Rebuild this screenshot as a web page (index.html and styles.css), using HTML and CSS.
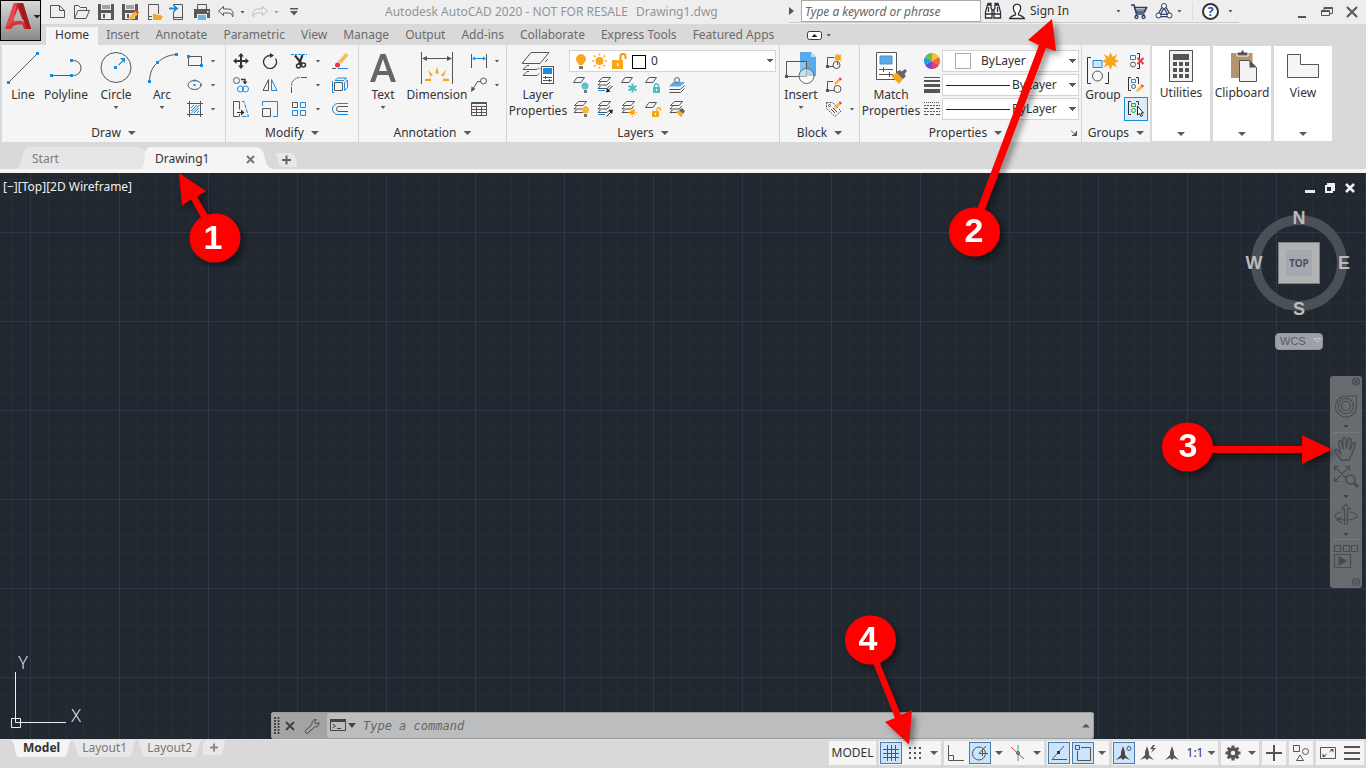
FILE: index.html
```html
<!DOCTYPE html>
<html lang="en">
<head>
<meta charset="utf-8">
<title>Autodesk AutoCAD 2020 - Drawing1.dwg</title>
<link rel="stylesheet" href="styles.css">
</head>
<body>
<svg class="sprite" aria-hidden="true">
  <symbol id="sheet" viewBox="0 0 12 6"><path d="M4 .5h7.500l-3.500 5H.5z" class="k"/></symbol>
  <symbol id="stack" viewBox="0 0 14 13"><path d="M5.500.5h8l-3.500 4H1.500zM3.500 5.500l-2.500 2.500h9l3-3M3.500 9l-2.500 2.500h9l3-3" class="k"/></symbol>
  <symbol id="pencil" viewBox="0 0 8 8"><path d="M1 7l.6-2.200L5 1.400 6.800 3.200 3.200 6.400z" fill="#fdb43c"/><path d="M5 1.400L6.200.2 8 2 6.800 3.200z" fill="#f03c3c"/></symbol>
</svg>

<header class="top">
  <button class="app-btn" aria-label="Application menu">
    <svg width="28" height="30" viewBox="0 0 28 30"><path d="M1 27L10 1h9l8 26h-7l-2-6-8-2-3 8z" fill="#c8242b"/><path d="M1 27L10 1h3L8 27z" fill="#e8474b"/><path d="M10 16l4-10 4 11 4 3-12-1z" fill="#b9b3b3"/><path d="M14 3l5-2 8 26h-4z" fill="#a31920"/><path d="M1 27c6-8 14-10 19-7l2 4c-7-3-13-1-16 3z" fill="#d8353a"/></svg>
    <span class="caret caret-dark"></span>
  </button>

  <div class="titlebar">
    <div class="qat">
      <button aria-label="New"><svg width="18" height="16" viewBox="0 0 18 16"><path d="M1.500 1.500h9l5 5v7h-14zM10.500 1.500v5h5" class="k"/></svg></button>
      <button aria-label="Open"><svg width="18" height="16" viewBox="0 0 18 16"><path d="M1.500 14.500v-13h4l2 2h6v3M1.500 14.500l3.500-8h11.500l-3.500 8z" class="k"/></svg></button>
      <button aria-label="Save"><svg width="18" height="18" viewBox="0 0 18 18"><path d="M1 1h16v16H1z" fill="#595959"/><path d="M4 1h10v6H4zM4 10h10v6H4z" fill="#eee"/><path d="M5 2.500h8v1H5zM5 4.500h8v1H5zM6 11h2v4H6z" fill="#595959"/></svg></button>
      <button aria-label="Save As"><svg width="18" height="18" viewBox="0 0 18 18"><path d="M1 1h16v16H1z" fill="#595959"/><path d="M4 1h10v6H4zM4 10h10v6H4z" fill="#eee"/><path d="M5 2.500h8v1H5zM5 4.500h8v1H5zM6 11h2v4H6z" fill="#595959"/><path d="M8 17l1-4 5-5 3 3-5 5z" fill="#fdb43c"/><path d="M14 8l1.500-1.500 2.500 3L17 11z" fill="#f03c3c"/></svg></button>
      <button aria-label="Open from mobile"><svg width="18" height="18" viewBox="0 0 18 18"><path d="M3.500 17V1.500h10V11M3 16.500h4M3.500 13.500H7" class="k"/><path d="M8 17v-6h3l1 1h4v1h2l-2 4z" fill="#f5a623"/></svg></button>
      <button aria-label="Save to mobile"><svg width="18" height="18" viewBox="0 0 18 18"><path d="M4.500 3V1.500h9v15h-9V8M5 14.500h8" class="k"/><path d="M0 4.500h5V2l4.500 3.500L5 9V6.500H0z" fill="#1a8ce0"/></svg></button>
      <button aria-label="Plot"><svg width="18" height="18" viewBox="0 0 18 18"><path d="M4.500 6V1.500h9V6" class="k"/><path d="M1 6h16v9h-3v-4H4v4H1z" fill="#595959"/><path d="M14 8h1.500v1.500H14z" fill="#fff"/><path d="M5 12h8v5H5z" fill="#6cb4e8"/></svg></button>
      <button aria-label="Undo"><svg width="18" height="14" viewBox="0 0 18 14"><path d="M6.500 1.500L1.500 6l5 4.500V8h5c2.500 0 4 1.500 4 4 1.500-4 0-8-4-8h-5z" class="k"/></svg></button>
      <span class="caret caret-sm"></span>
      <button aria-label="Redo"><svg width="18" height="14" viewBox="0 0 18 14"><path d="M11.500 1.500l5 4.500-5 4.500V8h-5c-2.500 0-4 1.500-4 4C1 8 2.500 4 6.500 4h5z" fill="none" stroke="#bdbdbd"/></svg></button>
      <span class="caret caret-sm faint"></span>
      <button aria-label="Customize"><svg width="10" height="8" viewBox="0 0 10 8"><path d="M1 0h8v1.500H1zM1 3h8L5 7.500z" fill="#595959"/></svg></button>
    </div>
    <h1 class="app-title"><span>Autodesk AutoCAD 2020 - NOT FOR RESALE</span><span>Drawing1.dwg</span></h1>
    <div class="infocenter">
      <svg class="play" width="5" height="8" viewBox="0 0 5 8"><path d="M0 0l5 4-5 4z" fill="#555"/></svg>
      <input class="search" type="text" aria-label="Search" placeholder="Type a keyword or phrase">
      <button class="i24" aria-label="Find"><svg width="18" height="18" viewBox="0 0 18 18"><path d="M3.500 3h3.500v3l1 2v8H1.500v-6zM14.500 3H11v3l-1 2v8h6.500v-6zM8 8h2v4H8zM4 1.500h3V3H4zM11 1.500h3V3h-3zM1.500 12H8M10 12h6.500M4.500 5v5M13.500 5v5" fill="#fff" stroke="#2b2f38" stroke-width="1.300"/></svg></button>
      <button class="signin"><svg width="18" height="17" viewBox="0 0 18 17"><path d="M9 1.200c2.600 0 3.800 2 3.600 4.300-.2 2-1.300 4-2.100 4.800v1.500c3 .8 5 1.500 5.800 3.700H1.700c.8-2.200 2.800-2.900 5.800-3.700v-1.500C6.700 9.500 5.600 7.500 5.400 5.500 5.200 3.200 6.400 1.200 9 1.200z" fill="#fff" stroke="#2b2f38" stroke-width="1.300"/></svg><span>Sign In</span><i class="caret caret-sm"></i></button>
      <button class="i24" aria-label="App store"><svg width="18" height="18" viewBox="0 0 18 18"><path d="M1 3h3l2.500 9h8M4.800 5.500h11.700l-2 4.500H6" fill="none" stroke="#2d3c66" stroke-width="1.700"/><path d="M6 8h9" stroke="#2d3c66"/><circle cx="6.500" cy="15" r="1.500" fill="none" stroke="#2d3c66" stroke-width="1.300"/><circle cx="13.500" cy="15" r="1.500" fill="none" stroke="#2d3c66" stroke-width="1.300"/></svg></button>
      <button class="a360" aria-label="Connect"><svg width="18" height="18" viewBox="0 0 18 18"><path d="M9 4l5.500 9.500h-11z" fill="none" stroke="#2d3c66" stroke-width="3.400" stroke-linejoin="round"/><path d="M9 4l5.500 9.500h-11z" fill="none" stroke="#fff" stroke-linejoin="round"/><circle cx="9" cy="4" r="2.500" fill="#fff" stroke="#2d3c66"/><circle cx="3.500" cy="13.500" r="2.500" fill="#fff" stroke="#2d3c66"/><circle cx="14.500" cy="13.500" r="2.500" fill="#fff" stroke="#2d3c66"/></svg><i class="caret caret-sm"></i></button>
      <button class="help" aria-label="Help"><b>?</b></button>
      <i class="caret caret-sm"></i>
    </div>
    <div class="win">
      <button aria-label="Minimize"><svg width="12" height="14" viewBox="0 0 12 14"><path d="M2 12h8" stroke="#555" stroke-width="2"/></svg></button>
      <button aria-label="Restore"><svg width="12" height="12" viewBox="0 0 12 12"><path d="M.5 4.500h8v5h-8zM3 4V1.500h8.500v6H9M3 2.500h8.500M.5 5.500h8" class="k"/></svg></button>
      <button aria-label="Close"><svg width="12" height="12" viewBox="0 0 12 12"><path d="M1 1l10 10M11 1L1 11" stroke="#555" stroke-width="2"/></svg></button>
    </div>
  </div>

  <nav class="ribbon-tabs">
    <a href="#" class="on">Home</a><a href="#">Insert</a><a href="#">Annotate</a><a href="#">Parametric</a><a href="#">View</a><a href="#">Manage</a><a href="#">Output</a><a href="#">Add-ins</a><a href="#">Collaborate</a><a href="#">Express Tools</a><a href="#">Featured Apps</a>
    <button class="min-ribbon" aria-label="Minimize ribbon"><svg width="15" height="9" viewBox="0 0 15 9"><rect x=".5" y=".5" width="14" height="8" rx="2" fill="#fff" stroke="#333a45"/><path d="M4.500 6L7.500 3l3 3z" fill="#222"/></svg><i class="caret caret-sm"></i></button>
  </nav>
</header>

<section class="ribbon" aria-label="Ribbon">
  <div class="panel p-draw">
    <div class="body">
      <button class="big w42"><svg width="32" height="32" viewBox="0 0 32 32"><path d="M1.500 30.500l29-29" class="k"/><path d="M0 29h3v3H0zM29 0h3v3h-3z" class="b"/></svg><span>Line</span></button>
      <button class="big w44"><svg width="32" height="32" viewBox="0 0 32 32"><path d="M1.500 23.500h20M21.500 8.500h2a7.500 7.500 0 0 1 0 15h-2" class="k"/><path d="M0 22h3v3H0zM20 22h3v3h-3zM20 7h3v3h-3z" class="b"/></svg><span>Polyline</span></button>
      <button class="big w56"><svg width="32" height="32" viewBox="0 0 32 32"><circle cx="16" cy="15.500" r="15" class="k"/><path d="M14 14h3v3h-3zM20 6h5v5l-1.700-1.700-4.300 4.300-.9-.9 4.300-4.300z" class="b"/></svg><span>Circle</span><i class="caret caret-sm"></i></button>
      <button class="big w36"><svg width="32" height="32" viewBox="0 0 32 32"><path d="M3.500 29c.5-9 3-14 8-18.500S22 3 30.500 2.500" class="k"/><path d="M2 28h3v3H2zM10 9h3v3h-3zM29 1h3v3h-3z" class="b"/></svg><span>Arc</span><i class="caret caret-sm"></i></button>
      <div class="smalls s-pair">
        <button aria-label="Rectangle"><svg width="16" height="16" viewBox="0 0 16 16"><path d="M1.500 3.500h13v9h-13z" class="k"/><path d="M0 2h3v3H0zM13 11h3v3h-3z" class="b"/></svg></button><i class="caret caret-sm"></i>
        <button aria-label="Ellipse"><svg width="16" height="16" viewBox="0 0 16 16"><ellipse cx="7.500" cy="8" rx="6.500" ry="4.500" class="k"/><path d="M6.500 7h2v2h-2zM6.500 2.500h2v2h-2zM13 7h2v2h-2z" class="b"/></svg></button><i class="caret caret-sm"></i>
        <button aria-label="Hatch"><svg width="16" height="16" viewBox="0 0 16 16"><path d="M0 2.500h16M0 13.500h16M2.500 0v16M13.500 0v16" class="k"/><path d="M4 7l3-3M4 10l6-6M4 12.500L12.500 4M7 12l5-5M10 12l2-2" stroke="#1a8ce0"/></svg></button><i class="caret caret-sm"></i>
      </div>
    </div>
    <button class="ptitle">Draw<i class="caret"></i></button>
  </div>

  <div class="panel p-modify">
    <div class="body">
      <div class="smalls s-modify">
        <button aria-label="Move"><svg width="16" height="16" viewBox="0 0 16 16"><path d="M8 0l3 3.500H9V7h3.500V5L16 8l-3.500 3V9H9v3.500h2L8 16l-3-3.500h2V9H3.500v2L0 8l3.500-3v2H7V3.500H5z" fill="#333"/></svg></button>
        <button aria-label="Rotate"><svg width="16" height="16" viewBox="0 0 16 16"><path d="M13.500 5.500A6.500 6.500 0 1 1 8 2.500h1" fill="none" stroke="#333" stroke-width="1.300"/><path d="M8 0v5l4-2.500z" fill="#333"/></svg></button>
        <button aria-label="Trim"><svg width="16" height="16" viewBox="0 0 16 16"><path d="M0 1.500h6" stroke="#1a8ce0" stroke-dasharray="3 1"/><path d="M7 1.500h9" stroke="#1a8ce0" stroke-dasharray="3 1"/><path d="M4 2.500l6.500 8M11.500 2L8 11" stroke="#333" stroke-width="2.200"/><circle cx="7.500" cy="13" r="2" fill="none" stroke="#333" stroke-width="1.500"/><circle cx="12.500" cy="12" r="2" fill="none" stroke="#333" stroke-width="1.500"/></svg></button><i class="caret caret-sm"></i>
        <button aria-label="Erase"><svg width="16" height="16" viewBox="0 0 16 16"><path d="M6 8.500L13.500 0 16 1v2L9 11z" fill="#f9bd5c"/><path d="M5.500 9.500L8.500 12" stroke="#fff" stroke-width="1.500"/><circle cx="5.500" cy="12" r="2.500" fill="#f0323a"/><path d="M0 15.500h4" stroke="#555"/><path d="M6 15.500h10" stroke="#1a8ce0"/></svg></button>

        <button aria-label="Copy"><svg width="16" height="16" viewBox="0 0 16 16"><circle cx="3.500" cy="3.500" r="3" class="k"/><path d="M8 2.500h4V5" fill="none" stroke="#333" stroke-width="1.300"/><path d="M9.500 4.500h5L12 7.500z" fill="#333"/><circle cx="7.500" cy="12" r="3" class="bs"/><circle cx="12.500" cy="12" r="3" class="bs"/></svg></button>
        <button aria-label="Mirror"><svg width="16" height="16" viewBox="0 0 16 16"><path d="M6.500 2.500v11H1z" class="k"/><path d="M9.500 2.500v11H15z" class="bs"/></svg></button>
        <button aria-label="Fillet"><svg width="16" height="16" viewBox="0 0 16 16"><path d="M.5 9C.5 4 4 .5 9 .5" class="bs"/><path d="M.5 10v6M10 .5h6" stroke="#555"/></svg></button><i class="caret caret-sm"></i>
        <button aria-label="Explode"><svg width="16" height="16" viewBox="0 0 16 16"><path d="M2.500 5.500h8v8h-8z" class="k"/><path d="M.5 4v11.500h2M3 3.500L5.500 1h9L12 3.500zM12.500 13.500l3-3V3l-3 3z" class="bs"/></svg></button>

        <button aria-label="Stretch"><svg width="16" height="16" viewBox="0 0 16 16"><path d="M6 15.500H.5V.5h6v8M6.500 13v2.500" class="k"/><path d="M9 .5h2l4.500 15H9" fill="none" stroke="#1a8ce0" stroke-dasharray="4 1"/><path d="M4 11h4V8.500l3.500 3L8 14.500V12H4z" fill="#333"/></svg></button>
        <button aria-label="Scale"><svg width="16" height="16" viewBox="0 0 16 16"><path d="M.5 5V.5h15v15H11" class="bs"/><path d="M.5 7.500h8v8h-8z" class="k"/></svg></button>
        <button aria-label="Array"><svg width="16" height="16" viewBox="0 0 16 16"><path d="M1.500 1.500h5v5h-5z" class="k"/><path d="M9.500 1.500h5v5h-5zM1.500 9.500h5v5h-5zM9.500 9.500h5v5h-5z" class="bs"/></svg></button><i class="caret caret-sm"></i>
        <button aria-label="Offset"><svg width="16" height="16" viewBox="0 0 16 16"><path d="M16 2.500H6a5.500 5.500 0 0 0 0 11h10" class="bs"/><path d="M16 5.500H7a2.500 2.500 0 0 0 0 5h9" class="k"/></svg></button>
      </div>
    </div>
    <button class="ptitle">Modify<i class="caret"></i></button>
  </div>

  <div class="panel p-anno">
    <div class="body">
      <button class="big w48"><svg width="32" height="32" viewBox="0 0 32 32"><path d="M3 30L13.500 2h5L29 30h-5l-2.500-7h-11L8 30zM12 19h8L16 7z" fill="#666"/></svg><span>Text</span><i class="caret caret-sm"></i></button>
      <button class="big w60"><svg width="32" height="32" viewBox="0 0 32 32"><path d="M.5 0v32M31.500 0v32M2 6.500h28" class="k"/><path d="M1 6.500l5-2.500v5zM31 6.500L26 4v5z" fill="#555"/><path d="M16 15l1.800 6.500h-3.600zM7 18l5 5-2.500 1.500zM25 18l-5 5 2.500 1.500zM4 27l6-.5V29H4zM28 27l-6-.5V29h6z" fill="#f9a61a"/></svg><span>Dimension</span></button>
      <div class="smalls s-pair s-tight">
        <button aria-label="Linear"><svg width="16" height="16" viewBox="0 0 16 16"><path d="M.5 1v14M15.500 1v14" class="k"/><path d="M1 5.500L4 3.500v1.500h8V3.500l3 2-3 2V6H4v1.500z" class="b"/></svg></button><i class="caret caret-sm"></i>
        <button aria-label="Leader"><svg width="16" height="16" viewBox="0 0 16 16"><circle cx="12.500" cy="4" r="3" class="k"/><path d="M9.500 4.500h-3L2 12" class="k"/><path d="M0 15l.5-5.500 4 2.500z" fill="#555"/></svg></button><i class="caret caret-sm"></i>
        <button aria-label="Table"><svg width="16" height="16" viewBox="0 0 16 16"><path d="M.5 1.500h15v13H.5zM.5 5.500h15M.5 8.500h15M.5 11.500h15M5.500 5v9M10.500 5v9M.5 2.500h15" class="k"/></svg></button>
      </div>
    </div>
    <button class="ptitle">Annotation<i class="caret"></i></button>
  </div>

  <div class="panel p-layers">
    <div class="body">
      <button class="big w62"><svg width="32" height="32" viewBox="0 0 32 32"><path d="M9 .5h18L18 11.500H0zM7 13.500H5l-4 4h14l2-2M26 7l-3 3M7 19.500H5l-4 4h14l2-2M18 17.500l2-2" class="k"/><rect x="19.500" y="14.500" width="12" height="17" fill="#fff" stroke="#555"/><path d="M21 16h9v6h-9z" class="b"/><path d="M21 25.500h9M21 28.500h9M23.500 24v3M27.500 27v3" class="k"/></svg><span>Layer<br>Properties</span></button>
      <div class="layer-col">
        <div class="field layer-field">
          <svg width="86" height="18" viewBox="0 0 86 18"><path d="M4 11a5 5 0 1 1 6 0l-1 2H5z" fill="#f9a61a"/><path d="M5 14h4v3H5z" fill="#777"/><circle cx="25.500" cy="9" r="4" fill="#f9a61a"/><path d="M25.500 1.500v2M25.500 14.500v2M18 9h2M31 9h2M20 3.500l1.500 1.500M29.500 13l1.500 1.500M31 3.500L29.500 5M21.500 13L20 14.500" stroke="#f9a61a" stroke-width="1.500"/><path d="M38 8h11v9H38z" fill="#f9a61a"/><path d="M46.500 8V4q0-2 2.500-2t2.500 2v3" fill="none" stroke="#f0960a" stroke-width="2"/><path d="M43 11h1.500v3H43z" fill="#fff"/><rect x="58.500" y="3.500" width="13" height="13" fill="#fff" stroke="#000"/></svg>
          <select aria-label="Layer"><option>0</option></select>
        </div>
        <div class="layer-icons">
          <button aria-label="Off"><svg width="16" height="16" viewBox="0 0 16 16"><use href="#sheet" width="12" height="6"/><circle cx="12" cy="9" r="3.500" fill="#59c3cc"/><path d="M11 13h3v3h-3z" fill="#777"/></svg></button>
          <button aria-label="Isolate"><svg width="16" height="16" viewBox="0 0 16 16"><use href="#stack" width="14" height="13"/><path d="M1 13.500h7" stroke="#1a8ce0"/><path d="M15.500 9L11 13.500" stroke="#222"/><path d="M9 15.500l1-4.500 3.500 3.500z" fill="#222"/></svg></button>
          <button aria-label="Freeze"><svg width="16" height="16" viewBox="0 0 16 16"><use href="#sheet" width="12" height="6"/><path d="M11.500 6.500v9M7.500 8.800l8 4.500M15.500 8.800l-8 4.500" stroke="#4dbec8" stroke-width="2"/></svg></button>
          <button aria-label="Lock"><svg width="16" height="16" viewBox="0 0 16 16"><use href="#sheet" width="12" height="6"/><path d="M8 10h7v6H8z" fill="#4dbec8"/><path d="M9.500 10V8q2-2.500 4 0v2" fill="none" stroke="#4dbec8" stroke-width="1.300"/><path d="M11 12h1v2h-1z" fill="#fff"/></svg></button>
          <button aria-label="Make current"><svg width="16" height="16" viewBox="0 0 16 16"><path d="M4 5h12l-4.500 4.500H0z" fill="#5ba9e6"/><circle cx="8" cy="3" r="2.500" fill="#eee" stroke="#666"/><path d="M.5 12.500h11l4-4M.5 15.500h11l4-4" class="k"/></svg></button>
          <button aria-label="Turn all on"><svg width="16" height="16" viewBox="0 0 16 16"><use href="#stack" width="14" height="13"/><circle cx="12.500" cy="9" r="3.500" fill="#fdb43c"/><path d="M11 13h3v3h-3z" fill="#777"/></svg></button>
          <button aria-label="Unisolate"><svg width="16" height="16" viewBox="0 0 16 16"><use href="#stack" width="14" height="13"/><path d="M1 13.500h7" stroke="#1a8ce0"/><path d="M9.500 15.500L14 11" stroke="#222"/><path d="M16 8.500l-1 4.500-3.500-3.500z" fill="#222"/></svg></button>
          <button aria-label="Thaw"><svg width="16" height="16" viewBox="0 0 16 16"><use href="#stack" width="14" height="13"/><circle cx="11.500" cy="11.500" r="2.500" fill="#f9a61a"/><path d="M11.500 7v9M7 11.500h9M8.500 8.500l6 6M14.500 8.500l-6 6" stroke="#f9a61a" stroke-dasharray="1 7"/></svg></button>
          <button aria-label="Unlock"><svg width="16" height="16" viewBox="0 0 16 16"><use href="#sheet" y="1" width="12" height="6"/><path d="M7 10h7v6H7z" fill="#f9a61a"/><path d="M12 10V8q2-2.500 3.500 0v2" fill="none" stroke="#f9a61a" stroke-width="1.300"/><path d="M10 12h1v2h-1z" fill="#fff"/></svg></button>
          <button aria-label="Match layer"><svg width="16" height="16" viewBox="0 0 16 16"><use href="#stack" width="14" height="13"/><path d="M7 11l3-2 4 5-2 2z" fill="#f9a61a"/><path d="M10 9l3-2 3 3-2 3z" fill="#666"/></svg></button>
        </div>
      </div>
    </div>
    <button class="ptitle">Layers<i class="caret"></i></button>
  </div>

  <div class="panel p-block">
    <div class="body">
      <button class="big w42"><svg width="32" height="32" viewBox="0 0 32 32"><path d="M15 0h11l5 5v19H15z" fill="#5ba9e6"/><path d="M26 0v5h5z" fill="#b9dcf5"/><path d="M1.500 9.500h20v15h-20z" fill="#f5f5f5" fill-opacity=".3" stroke="#555"/><circle cx="21.500" cy="24" r="7.500" fill="#fff" fill-opacity=".5" stroke="#666"/><path d="M0 23h3v3H0z" fill="#555"/></svg><span>Insert</span><i class="caret caret-sm"></i></button>
      <div class="smalls s-pair s-tight">
        <button aria-label="Create block"><svg width="16" height="16" viewBox="0 0 16 16"><path d="M1.500 13.500v-9H8M1 13.500h7M11.500 8v4" class="k"/><path d="M0 12h3v3H0z" fill="#555"/><circle cx="10.500" cy="12" r="3.500" class="k"/><path d="M12 0l1 2.500L15.500 1l-1 2.500L16 4.500 14.500 5.500l1 2.500L13 7l-1 2-1-2-2.500 1 1-2.500L8 4.500l1.500-1L8.500 1 11 2.500z" fill="#f9a61a"/></svg></button>
        <button aria-label="Edit block" class="c1"><svg width="16" height="16" viewBox="0 0 16 16"><path d="M1.500 13.500v-9H7M1 13.500h7" class="k"/><path d="M0 12h3v3H0z" fill="#555"/><circle cx="11.500" cy="12" r="3.500" class="k"/><use href="#pencil" x="7" width="9" height="9"/></svg></button>
        <button aria-label="Edit attributes"><svg width="16" height="16" viewBox="0 0 16 16"><path d="M.5 1.500h6L15 10l-6 5.500L.5 7.500z" fill="none" stroke="#555" stroke-dasharray="2 1"/><circle cx="3.500" cy="4.500" r="1" class="k"/><path d="M5 8l4 4M7 7l4 4" class="k"/><use href="#pencil" x="7" width="9" height="9"/></svg></button><i class="caret caret-sm"></i>
      </div>
    </div>
    <button class="ptitle">Block<i class="caret"></i></button>
  </div>

  <div class="panel p-props">
    <div class="body">
      <button class="big w62"><svg width="32" height="32" viewBox="0 0 32 32"><path d="M1.500.5h20v27h-20z" fill="#fff" stroke="#555"/><path d="M5 4h12v8H5z" fill="#5ba9e6" stroke="#4a8fc4"/><path d="M4 17.500h14M4 22.500h14M8.500 15v5M14.500 20v5" class="k"/><path d="M16 24l7-4 5 7-4 5z" fill="#f9a61a"/><path d="M21 20l4-2 6 6-3 3zM26 20l4-3 2 2-3 4z" fill="#666"/></svg><span>Match<br>Properties</span></button>
      <div class="prop-rows">
        <svg width="16" height="16" viewBox="0 0 16 16"><path d="M8 8V0a8 8 0 0 1 6.900 4z" fill="#f9c02a"/><path d="M8 8l6.900-4a8 8 0 0 1 0 8z" fill="#f06a3c"/><path d="M8 8l6.900 4A8 8 0 0 1 8 16z" fill="#d8456f"/><path d="M8 8v8a8 8 0 0 1-6.900-4z" fill="#6a4bd0"/><path d="M8 8l-6.900 4a8 8 0 0 1 0-8z" fill="#20a0d8"/><path d="M8 8L1.100 4A8 8 0 0 1 8 0z" fill="#66bb4a"/></svg>
        <div class="field"><span class="swatch"></span><select aria-label="Object color"><option>ByLayer</option></select></div>
        <svg width="16" height="16" viewBox="0 0 16 16"><path d="M0 .5h16" stroke="#555"/><path d="M0 4h16" stroke="#555" stroke-width="2"/><path d="M0 8.500h16" stroke="#555" stroke-width="3"/><path d="M0 14h16" stroke="#555" stroke-width="4"/></svg>
        <div class="field"><span class="rule"></span><select aria-label="Lineweight"><option>ByLayer</option></select></div>
        <svg width="16" height="16" viewBox="0 0 16 16"><path d="M0 1.500h16" stroke="#555" stroke-dasharray="1 1"/><path d="M0 4.500h16M0 10.500h16" stroke="#555" stroke-dasharray="2 1"/><path d="M0 7.500h16M0 13.500h16" stroke="#555" stroke-dasharray="4 2"/></svg>
        <div class="field"><span class="rule"></span><select aria-label="Linetype"><option>ByLayer</option></select></div>
      </div>
    </div>
    <div class="title-row"><button class="ptitle">Properties<i class="caret"></i></button><button class="launcher" aria-label="Properties palette"><svg width="6" height="6" viewBox="0 0 6 6"><path d="M0 .5l3 3M5.500 1v4.500H1" class="k"/><path d="M5.500 1.500v4h-4z" fill="#555"/></svg></button></div>
  </div>

  <div class="panel p-groups">
    <div class="body">
      <button class="big w42"><svg width="32" height="32" viewBox="0 0 32 32"><path d="M4 5.500H.5v26H4M18 31.500h3.500V20" fill="none" stroke="#333"/><path d="M6 8.500h9v7H6z" fill="#cfe5f7" stroke="#1a8ce0"/><circle cx="10.500" cy="24" r="5" class="k"/><path d="M23.500 0l2 5 4.500-3-2 5 4 2-4 2 2 4.500-4.500-2.500-2 5-2-5-4.500 2.500 2-4.500-4-2 4-2-2-5 4.500 3z" fill="#f9a61a"/></svg><span>Group</span></button>
      <div class="smalls s-one">
        <button aria-label="Ungroup"><svg width="16" height="16" viewBox="0 0 16 16"><path d="M2.500 2.500h5v4h-5z" class="bs"/><circle cx="5" cy="11.500" r="2.500" class="k"/><path d="M9 .5h2.500v15H9" fill="none" stroke="#333"/><path d="M9.500 5l6 6M15.500 5l-6 6" stroke="#f03c3c" stroke-width="2"/></svg></button>
        <button aria-label="Group edit"><svg width="16" height="16" viewBox="0 0 16 16"><path d="M3 .5H.5v13H3M8 .5h2.500V7" fill="none" stroke="#333"/><path d="M3.500 2.500h4v3h-4z" class="bs"/><circle cx="5.500" cy="9.500" r="2" class="k"/><use href="#pencil" x="7" y="7" width="9" height="9"/></svg></button>
        <button aria-label="Group selection on" class="on"><svg width="16" height="16" viewBox="0 0 16 16"><path d="M3 .5H.5v13H3M8 .5h2.500V4" fill="none" stroke="#333"/><path d="M3.500 2.500h4v3h-4z" fill="none" stroke="#22a84a"/><circle cx="5.500" cy="9.500" r="2" fill="none" stroke="#22a84a"/><path d="M9.500 5v9l2-1.500 1.500 3 1.500-1-1.500-2.500h2.500z" fill="#fff" stroke="#222"/></svg></button>
      </div>
    </div>
    <button class="ptitle">Groups<i class="caret"></i></button>
  </div>

  <button class="mini"><svg width="32" height="32" viewBox="0 0 32 32"><rect x="4.500" y=".5" width="23" height="31" fill="#f2f2f2" stroke="#555"/><path d="M8 4h16v6H8zM8 12h4v4H8zM14 12h4v4h-4zM20 12h4v4h-4zM8 18h4v4H8zM14 18h4v4h-4zM20 18h4v4h-4zM8 24h4v4H8zM14 24h4v4h-4zM20 24h4v4h-4z" fill="#555"/></svg><span>Utilities</span><i class="caret"></i></button>
  <button class="mini"><svg width="32" height="32" viewBox="0 0 32 32"><path d="M5 3h21.500v25H5z" fill="#b39370"/><path d="M11 2h4V0h3v2h4v4H11z" fill="#555" stroke="#fff"/><path d="M13.500 10.500h10l7 7v14h-17z" fill="#f2f2f2" stroke="#555"/><path d="M23.500 10.500v7h7z" fill="#555"/></svg><span>Clipboard</span><i class="caret"></i></button>
  <button class="mini"><svg width="32" height="32" viewBox="0 0 32 32"><path d="M.5 4.500h13v10h18v13H.5z" fill="#f5f5f5" stroke="#555"/></svg><span>View</span><i class="caret"></i></button>
</section>

<nav class="doc-tabs" aria-label="Drawings">
  <a href="#" class="doc"><svg viewBox="0 0 132 22" preserveAspectRatio="none"><path d="M0 22C8 20 4 0 14 0H118C128 0 130 4 132 8V22z" fill="#e6e6e6"/></svg><span>Start</span></a>
  <a href="#" class="doc on"><svg viewBox="0 0 132 22" preserveAspectRatio="none"><path d="M0 22C6 20 0 0 10 0H114C128 0 120 20 132 22z" fill="#f5f5f5"/></svg><span>Drawing1</span><b><svg width="9" height="9" viewBox="0 0 9 9"><path d="M1 1l7 7M8 1L1 8" stroke="#777" stroke-width="2"/></svg></b></a>
  <button class="add" aria-label="New drawing"><svg width="22" height="14" viewBox="0 0 22 14"><path d="M1 0h13c7 0 7 6 8 14H8C2 14 3 4 1 0z" fill="#e8e8e8"/><path d="M7 7h9M11.500 2.500v9" stroke="#666" stroke-width="2"/></svg></button>
</nav>

<main class="canvas">
  <div class="vp-label">[−][Top][2D Wireframe]</div>
  <div class="vp-win">
    <button aria-label="Minimize drawing"><svg width="12" height="12" viewBox="0 0 12 12"><path d="M1 9.500h10" stroke="#e8e8e8" stroke-width="3"/></svg></button>
    <button aria-label="Restore drawing"><svg width="12" height="12" viewBox="0 0 12 12"><path d="M2 4h6v6H2zM4 3V2h6v6H9" fill="none" stroke="#eee" stroke-width="2"/></svg></button>
    <button aria-label="Close drawing"><svg width="12" height="12" viewBox="0 0 12 12"><path d="M2 2l8 8M10 2l-8 8" stroke="#eee" stroke-width="2.500"/></svg></button>
  </div>

  <svg class="viewcube" width="106" height="110" viewBox="0 0 106 110">
    <circle cx="54" cy="55" r="43" fill="none" stroke="#4b5058" stroke-width="10"/>
    <rect x="33.500" y="34.500" width="41" height="41" fill="#b1b2b3" stroke="#7d7f82"/>
    <rect x="41" y="42" width="26" height="26" fill="#a5a8b1"/>
    <text x="54" y="59" class="top-t">TOP</text>
    <text x="54" y="16" class="dir">N</text><text x="54" y="107" class="dir">S</text><text x="9" y="61" class="dir">W</text><text x="99" y="61" class="dir">E</text>
  </svg>
  <button class="wcs">WCS<svg width="9" height="6" viewBox="0 0 9 6"><path d="M1 .5h7L4.500 4.500z" fill="none" stroke="#c4c6cc"/></svg></button>

  <div class="navbar" role="toolbar" aria-label="Navigation">
    <svg width="32" height="212" viewBox="0 0 32 212" fill="none" stroke="#484c51" stroke-width="1.200">
      <circle cx="26" cy="5.500" r="3.500"/><path d="M24 3.500l4 4M28 3.500l-4 4"/>
      <path d="M16 20h10.500v10a10.500 10.500 0 1 1-10.500-10z"/><circle cx="16" cy="30" r="7.500"/><circle cx="16" cy="30" r="4.500"/>
      <path d="M3 56.500h26M3 163.500h26" stroke="#777b7f"/>
      <path d="M13.500 49h5l-2.500 3zM13.500 119h5l-2.500 3zM13.500 157h5l-2.500 3z" fill="#3c4045" stroke="none"/>
      <path d="M11 84c-2-4-5-6-6-9-.5-2 2-2 3-.5l2.500 3L8.500 66c0-2 2.500-2 3 0l1.500 7-.2-10c0-2.200 2.900-2.200 3 0l.5 9.500 2-9c.4-2 3-1.500 2.800.5l-1.300 10 3-6.500c1-2 3.200-.8 2.600 1L21.500 79 19 84z" stroke-width="1.400"/>
      <path d="M5 91l14 14M19 91L5 105M4.500 95v-4.500H9M15 90.500h4.500V95M4.500 101v4.500H9"/><circle cx="20.500" cy="103.500" r="4.500" fill="#686c70" stroke-width="1.600"/><path d="M24 107l4 4" stroke-width="3"/>
      <path d="M16 128l4 5h-2.500v15h-3v-15H12z"/><path d="M12 136c-4 .5-7 2-7 4s5 4 11 4 11-2 11-4-3-3.500-7-4M12 141l-5 3 5 3"/>
      <path d="M4.500 169.500h6v6h-6zM13.500 169.500h6v6h-6zM21.500 169.500h6v6h-6zM4.500 178.500h16v13h-16z"/><path d="M9 181l7 4-7 4z" fill="#45494e"/>
      <circle cx="26" cy="206" r="3.500"/><path d="M24 205h4M24 207h4"/>
    </svg>
  </div>

  <svg class="ucs" width="90" height="90" viewBox="0 0 90 90"><path d="M15.500 27v50.500H66M11.500 73.500h9v9h-9z" fill="none" stroke="#eee"/><text x="23" y="24">Y</text><text x="76" y="77">X</text></svg>

  <div class="cmd">
    <div class="cmd-tools">
      <svg width="6" height="17" viewBox="0 0 6 17"><path d="M1 0v17M4.500 0v17" stroke="#444" stroke-width="2" stroke-dasharray="2 1"/></svg>
      <button aria-label="Close command line"><svg width="10" height="10" viewBox="0 0 10 10"><path d="M1 1l8 8M9 1L1 9" stroke="#444" stroke-width="2"/></svg></button>
      <button aria-label="Customize command line"><svg width="16" height="16" viewBox="0 0 16 16"><path d="M1.500 12.500L8 6.500C7.500 3.500 9.500 1 12.500 1.500L10.500 4l1.500 2 3-1.500c.5 3-2 5-4.500 4.500L4 15c-2 1-3.500-1-2.500-2.500z" fill="none" stroke="#444"/></svg></button>
    </div>
    <label class="cmd-line"><svg width="26" height="13" viewBox="0 0 26 13"><path d="M.5.5h15v11H.5z" fill="none" stroke="#444"/><path d="M0 0h16v3H0z" fill="#444"/><path d="M2.500 5l3 2-3 2M7 9.500h4" fill="none" stroke="#444"/><path d="M18 4h8l-4 5z" fill="#444"/></svg>
      <input type="text" aria-label="Command" placeholder="Type a command"><i class="caret up"></i></label>
  </div>
</main>

<footer class="bottom">
  <nav class="layouts" aria-label="Layouts">
    <a href="#" class="on"><svg viewBox="0 0 60 17" preserveAspectRatio="none"><path d="M0 0h60c-5 3-3 17-8 17H8C3 17 5 3 0 0z" fill="#f5f5f5"/></svg><span>Model</span></a>
    <a href="#"><svg viewBox="0 0 60 17" preserveAspectRatio="none"><path d="M0 0h60c-5 3-3 17-8 17H8C3 17 5 3 0 0z" fill="#e8e8e8"/></svg><span>Layout1</span></a>
    <a href="#"><svg viewBox="0 0 60 17" preserveAspectRatio="none"><path d="M0 0h60c-5 3-3 17-8 17H8C3 17 5 3 0 0z" fill="#e8e8e8"/></svg><span>Layout2</span></a>
    <button class="add" aria-label="New layout"><svg width="22" height="15" viewBox="0 0 22 15"><path d="M0 15V6C1 2 2 0 5 0h17c-1 8-2 15-7 15z" fill="#e8e8e8"/><path d="M7 7.500h8M11 3.500v8" stroke="#888" stroke-width="2"/></svg></button>
  </nav>
  <div class="status" role="toolbar" aria-label="Status bar">
    <div class="grp"><button class="model">MODEL</button></div>
    <div class="grp">
      <button class="on" aria-label="Grid"><svg width="16" height="16" viewBox="0 0 16 16"><path d="M4.500 0v16M8.500 0v16M12.500 0v16M0 4.500h16M0 8.500h16M0 12.500h16" class="k"/></svg></button>
      <button aria-label="Snap"><svg width="16" height="16" viewBox="0 0 16 16"><path d="M2 3h13M2 8h13M2 13h13" stroke="#555" stroke-width="2" stroke-dasharray="2 3"/></svg></button>
      <i class="caret"></i>
    </div>
    <div class="grp">
      <button aria-label="Ortho"><svg width="16" height="16" viewBox="0 0 16 16"><path d="M.5 0v15.500H16M.5 10.500h5v5" class="k"/></svg></button>
      <button class="on" aria-label="Polar"><svg width="16" height="16" viewBox="0 0 16 16"><circle cx="7" cy="8.500" r="6.500" class="k"/><path d="M7 8.500h9M7 8.500L14 1M10.500 5v6" class="k"/></svg></button>
      <i class="caret"></i>
      <button aria-label="Isometric"><svg width="16" height="16" viewBox="0 0 16 16"><path d="M1 2l13 12" stroke="#d03a3a"/><path d="M8 0v16" stroke="#36a84a"/><circle cx="8" cy="8" r="1.500" class="k"/></svg></button>
      <i class="caret"></i>
    </div>
    <div class="grp">
      <button class="on" aria-label="Object snap tracking"><svg width="16" height="16" viewBox="0 0 16 16"><path d="M13 1L1 14.500h15" class="k"/><path d="M6 6h3v3H6z" fill="#333"/></svg></button>
      <button class="on" aria-label="Object snap"><svg width="16" height="16" viewBox="0 0 16 16"><path d="M.5.500h4v4h-4zM6 2.500h9.500v13h-13V6" class="k"/></svg></button>
      <i class="caret"></i>
    </div>
    <div class="grp">
      <button class="on" aria-label="Annotation visibility"><svg width="16" height="16" viewBox="0 0 16 16"><path d="M7 1l2 6v3l5 5-5-2-2 2-2-2-5 2 5-5V7z" fill="#444"/><circle cx="13" cy="3.500" r="2" class="k"/></svg></button>
      <button aria-label="AutoScale"><svg width="16" height="16" viewBox="0 0 16 16"><path d="M7 1l2 6v3l5 5-5-2-2 2-2-2-5 2 5-5V7z" fill="#555"/><path d="M13 0l-3 4h3l-2 4 5-5h-3l2-3z" fill="#555"/></svg></button>
      <button aria-label="Annotation scale icon"><svg width="16" height="16" viewBox="0 0 16 16"><path d="M8 1l2 6v3l5 5-5-2-2 2-2-2-5 2 5-5V7z" fill="#555"/></svg></button>
      <button class="scale">1:1<i class="caret"></i></button>
    </div>
    <div class="grp">
      <button aria-label="Workspace"><svg width="16" height="16" viewBox="0 0 16 16"><circle cx="8" cy="8" r="4" fill="none" stroke="#555" stroke-width="3.500"/><path d="M8 .5v3M8 12.500v3M.5 8h3M12.500 8h3M2.700 2.700l2 2M11.300 11.300l2 2M13.300 2.700l-2 2M4.700 11.300l-2 2" stroke="#555" stroke-width="3"/></svg></button>
      <i class="caret"></i>
    </div>
    <div class="grp"><button aria-label="Annotation monitor"><svg width="16" height="16" viewBox="0 0 16 16"><path d="M0 8h16M8 0v16" stroke="#555" stroke-width="2"/></svg></button></div>
    <div class="grp"><button aria-label="Isolate objects"><svg width="16" height="16" viewBox="0 0 16 16"><path d="M.5.500h6v6h-6zM7 10l3.500 5.500h-7z" class="k"/><circle cx="12.500" cy="6.500" r="3" class="k"/></svg></button></div>
    <div class="grp">
      <button aria-label="Clean screen"><svg width="16" height="16" viewBox="0 0 16 16"><path d="M.5 2.500h15v11H.5z" class="k"/><path d="M9.500 7l3-2.500M6.500 9l-3 2.500" class="k"/><path d="M10 4h3.500v3.500zM2.500 8.500V12H6z" fill="#555"/></svg></button>
      <button aria-label="Customization"><svg width="16" height="16" viewBox="0 0 16 16"><path d="M0 2h16M0 8h16M0 14h16" stroke="#555" stroke-width="2"/></svg></button>
    </div>
  </div>
</footer>

<div class="callouts">
  <svg class="co co1" width="70" height="100" viewBox="0 0 70 100"><path d="M4 3l27 18-9 5.500 15 26-6 4-15-27-9 6z"/><ellipse cx="40" cy="68" rx="25.500" ry="24.500"/><text x="38" y="79">1</text></svg>
  <svg class="co co2" width="120" height="250" viewBox="0 0 120 250"><path d="M107 4l4 32-10-3-63 167-7-3L94 30l-11-5z"/><ellipse cx="29.500" cy="217" rx="25.500" ry="24.500"/><text x="29" y="227">2</text></svg>
  <svg class="co co3" width="180" height="60" viewBox="0 0 180 60"><path d="M50 26h92V15l30 14.500L142 44V33H50z"/><ellipse cx="27.500" cy="27" rx="25.500" ry="24.500"/><text x="28" y="37">3</text></svg>
  <svg class="co co4" width="80" height="140" viewBox="0 0 80 140"><path d="M31 49l6-2 22 54 11-5-3 34.500L43 108l10-4z"/><ellipse cx="28.500" cy="26" rx="25.500" ry="24.500"/><text x="26" y="36">4</text></svg>
</div>
</body>
</html>
```
FILE: styles.css
```css
* { box-sizing: border-box; }
html, body { height: 100%; }
body {
  margin: 0;
  display: flex;
  flex-direction: column;
  position: relative;
  overflow: hidden;
  background: #d9d9d9;
  color: #333;
  font: 12px/16px "Noto Sans", "Open Sans", sans-serif;
}
button, input, select { font: inherit; color: inherit; border: 0; background: none; padding: 0; margin: 0; }
a { color: inherit; text-decoration: none; }
svg { display: block; flex: none; }
.sprite { position: absolute; width: 0; height: 0; }
.k { fill: none; stroke: #555; }
.b { fill: #1a8ce0; }
.bs { fill: none; stroke: #1a8ce0; }

.caret {
  display: block;
  flex: none;
  width: 8px;
  height: 4px;
  background: #595959;
  clip-path: polygon(0 0, 100% 0, 50% 100%);
}
.caret-sm { width: 5px; height: 3px; }
.caret-dark { background: #223; }
.faint { background: #999; }
.up { clip-path: polygon(50% 0, 100% 100%, 0 100%); }

/* Title bar and ribbon tabs */
.top { display: grid; grid-template-columns: 46px 1fr; grid-template-rows: 24px 21px; flex: none; }
.app-btn {
  grid-row: 1 / 3;
  width: 41px;
  height: 41px;
  display: flex;
  align-items: center;
  gap: 1px;
  padding: 0 0 8px 3px;
  border: 1px solid #000;
  background: linear-gradient(#d8d8d8, #8a8a8a);
}
.titlebar { display: flex; align-items: stretch; background: #eee; margin-left: -5px; padding-left: 5px; }
.qat { display: flex; align-items: center; width: 339px; flex: none; }
.qat button { width: 24px; display: flex; justify-content: center; }
.qat .caret { margin: 0 3px 0 2px; }
.app-title { margin: 0; font-size: 12px; font-weight: 400; line-height: 24px; color: #949494; display: flex; gap: 8px; white-space: nowrap; flex: 1; }
.infocenter { display: flex; align-items: center; flex: none; height: 23px; border-bottom: 1px solid #ccc; padding-right: 6px; }
.play { margin-right: 7px; }
.search { width: 180px; height: 22px; border: 1px solid #aaa; background: #fff; padding: 0 3px; font-style: italic; }
.search::placeholder { color: #666; opacity: 1; }
.i24 { width: 24px; display: flex; justify-content: center; }
.signin { display: flex; align-items: center; gap: 4px; width: 122px; padding-left: 3px; color: #333; }
.signin .caret { margin-left: auto; margin-right: 6px; }
.a360 { display: flex; align-items: center; gap: 4px; width: 42px; padding-left: 4px; border-right: 1px solid #ddd; }
.help { width: 17px; height: 17px; margin: 0 9px; border: 2px solid #333; border-radius: 50%; background: #fff; color: #2457b5; font-size: 13px; line-height: 13px; }
.help b { display: block; }
.win { display: flex; align-items: center; gap: 13px; margin-left: 57px; padding-right: 8px; }
.ribbon-tabs { display: flex; align-items: flex-end; color: #6b6b6b; white-space: nowrap; }
.ribbon-tabs a { height: 18px; line-height: 16px; padding: 0 8px; }
.ribbon-tabs .on { background: #f5f5f5; color: #333; padding: 0 9px; }
.min-ribbon { display: flex; align-items: center; gap: 4px; height: 20px; margin-left: 25px; }

/* Ribbon */
.ribbon { display: flex; flex: none; height: 97px; padding-left: 2px; }
.panel { display: flex; flex-direction: column; background: #f5f5f5; border-right: 1px solid #d4d4d4; flex: none; }
.p-draw { width: 224px; }
.p-modify { width: 133px; }
.p-anno { width: 148px; }
.p-layers { width: 273px; }
.p-block { width: 80px; }
.p-props { width: 222px; }
.p-groups { width: 68px; border-right: 0; }
.body { display: flex; height: 79px; flex: none; }
.ptitle { display: flex; align-items: center; justify-content: center; gap: 7px; height: 18px; width: 100%; }
.title-row { display: flex; align-items: center; }
.launcher { padding-right: 4px; }
.big { display: flex; flex-direction: column; align-items: center; padding-top: 7px; gap: 3px; flex: none; line-height: 16px; white-space: nowrap; }
.w36 { width: 36px; } .w42 { width: 42px; } .w44 { width: 44px; } .w48 { width: 48px; }
.w56 { width: 56px; } .w60 { width: 60px; } .w62 { width: 62px; }
.smalls { display: grid; grid-auto-rows: 24px; align-items: center; justify-items: center; padding-top: 4px; align-content: start; }
.smalls button { display: flex; }
.s-pair { grid-template-columns: 24px 12px; padding-left: 3px; }
.s-tight { padding-left: 0; }
.s-pair .c1, .s-pair .c1 + button { grid-column: 1; }
.s-modify { grid-template-columns: 30px 28px 30px 8px 36px; }
.s-one { grid-template-columns: 24px; }
.s-one .on { padding: 3px; background: #dcebf8; border: 1px solid #1a8ce0; }
.layer-col { flex: 1; padding: 5px 3px 0 0; }
.field { display: flex; align-items: center; height: 22px; background: #fff; border: 1px solid #d4d4d4; min-width: 0; }
.field select {
  flex: 1;
  min-width: 0;
  height: 20px;
  appearance: none;
  background: linear-gradient(to bottom right, #595959 50%, transparent 50%) no-repeat right 1px center / 4px 4px, linear-gradient(to bottom left, #595959 50%, transparent 50%) no-repeat right 5px center / 4px 4px;
}
.layer-field { padding-left: 4px; }
.layer-field svg { margin-right: -9px; }
.layer-icons { display: grid; grid-template-columns: repeat(5, 24px); grid-auto-rows: 24px; align-items: center; justify-items: center; padding-top: 1px; }
.layer-icons button { display: flex; }
.prop-rows { flex: 1; display: grid; grid-template-columns: 18px 1fr; grid-auto-rows: 22px; row-gap: 2px; align-items: center; align-content: start; padding: 5px 2px 0 2px; }
.swatch { width: 16px; height: 16px; border: 1px solid #aaa; margin: 0 10px 0 12px; }
.rule { width: 64px; height: 1px; background: #222; margin: 0 2px 0 3px; }
.mini { display: flex; flex-direction: column; align-items: center; width: 58px; height: 95px; margin: 1px 1px 0 2px; padding: 4px 0 5px; background: #fff; flex: none; gap: 3px; }
.mini .caret { margin-top: auto; }

/* Drawing tabs */
.doc-tabs { display: flex; align-items: flex-end; flex: none; height: 31px; padding: 5px 0 4px 16px; background: linear-gradient(#d9d9d9 27px, #f5f5f5 27px); }
.doc { position: relative; height: 22px; width: 132px; padding: 2px 18px 0 16px; color: #7a7a7a; display: flex; align-items: center; }
.doc.on { color: #333; margin-left: -7px; padding-left: 14px; }
.doc > svg, .layouts a > svg { position: absolute; inset: 0; width: 100%; height: 100%; }
.doc > span, .doc > b, .layouts a > span { position: relative; }
.doc > b { margin-left: auto; }
.doc-tabs .add { height: 18px; margin-left: 2px; }

/* Drawing area: 89px major cells, five minor cells in each */
.canvas {
  position: relative;
  flex: 1;
  min-height: 0;
  overflow: hidden;
  background-color: #212830;
  background-image:
    linear-gradient(to right, #2f3648 1px, transparent 1px),
    linear-gradient(to bottom, #2f3648 1px, transparent 1px),
    linear-gradient(to right, transparent 18px, #262d37 18px 19px, transparent 19px 36px, #262d37 36px 37px, transparent 37px 53px, #262d37 53px 54px, transparent 54px 71px, #262d37 71px 72px, transparent 72px),
    linear-gradient(to bottom, transparent 18px, #262d37 18px 19px, transparent 19px 36px, #262d37 36px 37px, transparent 37px 53px, #262d37 53px 54px, transparent 54px 71px, #262d37 71px 72px, transparent 72px);
  background-size: 89px 89px;
  background-position: 30px 59px;
}
.vp-label { position: absolute; left: 3px; top: 6px; color: #f0f0f0; }
.vp-win { position: absolute; right: 10px; top: 9px; display: flex; gap: 8px; }
.viewcube { position: absolute; right: 15px; top: 35px; }
.viewcube text { text-anchor: middle; font-family: "Liberation Sans", Arial, sans-serif; font-weight: 700; }
.viewcube .dir { font-size: 18px; fill: #b9bbbd; }
.viewcube .top-t { font: 700 10px "Noto Sans", sans-serif; fill: #4d5158; }
.wcs { position: absolute; right: 43px; top: 160px; width: 48px; height: 17px; display: flex; align-items: center; gap: 7px; padding: 0 4px 2px; border-radius: 4px; border: 1px solid #8f929a; background: #9da0a9; color: #555b66; font: 11px "Liberation Sans", Arial, sans-serif; }
.navbar { position: absolute; right: 4px; top: 203px; border-radius: 3px; background: #686c70; }
.ucs { position: absolute; left: 0; bottom: 4px; }
.ucs text { fill: #f0f0f0; font: 300 18px/1 "Open Sans", "Noto Sans", sans-serif; text-anchor: middle; }
.cmd { position: absolute; left: 271px; right: 272px; bottom: 0; height: 27px; display: flex; background: #a2a4a6; border: 1px solid #999b9d; border-radius: 2px; }
.cmd-tools { display: flex; align-items: center; gap: 5px; width: 55px; padding-left: 2px; flex: none; }
.cmd-tools button:last-child { margin-left: 4px; }
.cmd-line { flex: 1; display: flex; align-items: center; gap: 7px; padding: 0 3px; background: #bcbdbf; border-radius: 3px; color: #444; }
.cmd-line input { flex: 1; font: italic 12px "DejaVu Sans Mono", monospace; outline: 0; }
.cmd-line input::placeholder { color: #666; opacity: 1; }

/* Layout tabs and status bar */
.bottom { display: flex; flex: none; height: 29px; justify-content: space-between; align-items: flex-start; border-top: 1px solid #e2e2e2; background: #d9d9d9; padding-right: 2px; }
.layouts { display: flex; padding-left: 11px; color: #777; }
.layouts a { position: relative; height: 17px; line-height: 16px; padding: 0 10px; }
.layouts .on { font-weight: 700; color: #333; padding: 0 12px; }
.layouts .add { height: 15px; margin-left: 1px; }
.status { display: flex; gap: 3px; padding-top: 1px; }
.grp { display: flex; align-items: center; height: 24px; background: #f5f5f5; padding: 0 1px; gap: 2px; }
.grp button { width: 22px; height: 22px; display: flex; align-items: center; justify-content: center; border: 1px solid transparent; }
.grp .on { background: #cce4fb; border-color: #4d7ba8; }
.grp > .caret { margin: 0 2px; }
.grp .model { width: 45px; }
.grp .scale { width: 32px; gap: 4px; }

/* Numbered callouts */
.co { position: absolute; fill: #f00; overflow: visible; pointer-events: none; filter: drop-shadow(4px 4px 3px rgba(0, 0, 0, .4)); }
.co text { fill: #fff; font: 700 34px "Liberation Sans", Arial, sans-serif; text-anchor: middle; }
.co1 { left: 175px; top: 170px; }
.co2 { left: 945px; top: 15px; }
.co3 { left: 1160px; top: 420px; }
.co4 { left: 842px; top: 614px; }
```
